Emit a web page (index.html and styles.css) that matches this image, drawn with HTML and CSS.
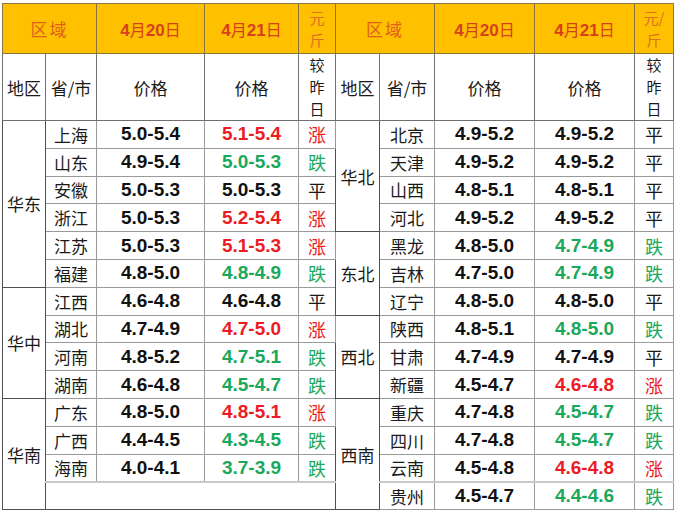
FILE: index.html
```html
<!DOCTYPE html>
<html lang="zh-CN">
<head>
<meta charset="utf-8">
<link rel="stylesheet" href="styles.css">
</head>
<body>
<table class="price-table">
  <colgroup>
    <col class="c-reg-l"><col class="c-prov-l"><col class="c-p1-l"><col class="c-p2-l"><col class="c-chg-l">
    <col class="c-reg-r"><col class="c-prov-r"><col class="c-p1-r"><col class="c-p2-r"><col class="c-chg-r">
  </colgroup>
  <thead>
    <tr class="head-1">
      <th colspan="2" class="h-area">区域</th>
      <th class="h-date"><b>4</b>月<b>20</b>日</th>
      <th class="h-date"><b>4</b>月<b>21</b>日</th>
      <th class="h-unit"><span class="ch">元</span><span class="ch">斤</span></th>
      <th colspan="2" class="h-area split">区域</th>
      <th class="h-date"><b>4</b>月<b>20</b>日</th>
      <th class="h-date"><b>4</b>月<b>21</b>日</th>
      <th class="h-unit"><span class="ch">元/</span><span class="ch">斤</span></th>
    </tr>
    <tr class="head-2">
      <th class="sub">地区</th>
      <th class="sub">省/市</th>
      <th class="sub">价格</th>
      <th class="sub">价格</th>
      <th class="sub vert"><span class="vc">较</span><span class="vc">昨</span><span class="vc">日</span></th>
      <th class="sub split">地区</th>
      <th class="sub">省/市</th>
      <th class="sub">价格</th>
      <th class="sub">价格</th>
      <th class="sub vert"><span class="vc">较</span><span class="vc">昨</span><span class="vc">日</span></th>
    </tr>
  </thead>
  <tbody>
    <tr>
      <td rowspan="6" class="region">华东</td>
      <td class="prov">上海</td><td class="num">5.0-5.4</td><td class="num up">5.1-5.4</td><td class="chg up">涨</td>
      <td rowspan="4" class="region split">华北</td>
      <td class="prov">北京</td><td class="num">4.9-5.2</td><td class="num">4.9-5.2</td><td class="chg">平</td>
    </tr>
    <tr>
      <td class="prov">山东</td><td class="num">4.9-5.4</td><td class="num down">5.0-5.3</td><td class="chg down">跌</td>
      <td class="prov">天津</td><td class="num">4.9-5.2</td><td class="num">4.9-5.2</td><td class="chg">平</td>
    </tr>
    <tr>
      <td class="prov">安徽</td><td class="num">5.0-5.3</td><td class="num">5.0-5.3</td><td class="chg">平</td>
      <td class="prov">山西</td><td class="num">4.8-5.1</td><td class="num">4.8-5.1</td><td class="chg">平</td>
    </tr>
    <tr>
      <td class="prov">浙江</td><td class="num">5.0-5.3</td><td class="num up">5.2-5.4</td><td class="chg up">涨</td>
      <td class="prov">河北</td><td class="num">4.9-5.2</td><td class="num">4.9-5.2</td><td class="chg">平</td>
    </tr>
    <tr>
      <td class="prov">江苏</td><td class="num">5.0-5.3</td><td class="num up">5.1-5.3</td><td class="chg up">涨</td>
      <td rowspan="3" class="region split">东北</td>
      <td class="prov">黑龙</td><td class="num">4.8-5.0</td><td class="num down">4.7-4.9</td><td class="chg down">跌</td>
    </tr>
    <tr>
      <td class="prov">福建</td><td class="num">4.8-5.0</td><td class="num down">4.8-4.9</td><td class="chg down">跌</td>
      <td class="prov">吉林</td><td class="num">4.7-5.0</td><td class="num down">4.7-4.9</td><td class="chg down">跌</td>
    </tr>
    <tr>
      <td rowspan="4" class="region">华中</td>
      <td class="prov">江西</td><td class="num">4.6-4.8</td><td class="num">4.6-4.8</td><td class="chg">平</td>
      <td class="prov">辽宁</td><td class="num">4.8-5.0</td><td class="num">4.8-5.0</td><td class="chg">平</td>
    </tr>
    <tr>
      <td class="prov">湖北</td><td class="num">4.7-4.9</td><td class="num up">4.7-5.0</td><td class="chg up">涨</td>
      <td rowspan="3" class="region split">西北</td>
      <td class="prov">陕西</td><td class="num">4.8-5.1</td><td class="num down">4.8-5.0</td><td class="chg down">跌</td>
    </tr>
    <tr>
      <td class="prov">河南</td><td class="num">4.8-5.2</td><td class="num down">4.7-5.1</td><td class="chg down">跌</td>
      <td class="prov">甘肃</td><td class="num">4.7-4.9</td><td class="num">4.7-4.9</td><td class="chg">平</td>
    </tr>
    <tr>
      <td class="prov">湖南</td><td class="num">4.6-4.8</td><td class="num down">4.5-4.7</td><td class="chg down">跌</td>
      <td class="prov">新疆</td><td class="num">4.5-4.7</td><td class="num up">4.6-4.8</td><td class="chg up">涨</td>
    </tr>
    <tr>
      <td rowspan="4" class="region">华南</td>
      <td class="prov">广东</td><td class="num">4.8-5.0</td><td class="num up">4.8-5.1</td><td class="chg up">涨</td>
      <td rowspan="4" class="region split">西南</td>
      <td class="prov">重庆</td><td class="num">4.7-4.8</td><td class="num down">4.5-4.7</td><td class="chg down">跌</td>
    </tr>
    <tr>
      <td class="prov">广西</td><td class="num">4.4-4.5</td><td class="num down">4.3-4.5</td><td class="chg down">跌</td>
      <td class="prov">四川</td><td class="num">4.7-4.8</td><td class="num down">4.5-4.7</td><td class="chg down">跌</td>
    </tr>
    <tr class="last-filled">
      <td class="prov">海南</td><td class="num">4.0-4.1</td><td class="num down">3.7-3.9</td><td class="chg down">跌</td>
      <td class="prov">云南</td><td class="num">4.5-4.8</td><td class="num up">4.6-4.8</td><td class="chg up">涨</td>
    </tr>
    <tr>
      <td colspan="4" class="empty"></td>
      <td class="prov">贵州</td><td class="num">4.5-4.7</td><td class="num down">4.4-4.6</td><td class="chg down">跌</td>
    </tr>
  </tbody>
</table>
</body>
</html>
```
FILE: styles.css
```css
html, body {
  margin: 0;
  padding: 0;
  background: #ffffff;
}
body {
  padding: 3px 0 0 2px;
  font-family: "Noto Sans CJK SC", "Liberation Sans", sans-serif;
}
.price-table {
  border-collapse: collapse;
  table-layout: fixed;
  width: 671px;
  border: 1px solid #404040;
  color: #1a1a1a;
}
.c-reg-l { width: 43px; }
.c-prov-l { width: 51px; }
.c-p1-l { width: 108px; }
.c-p2-l { width: 94px; }
.c-chg-l { width: 37px; }
.c-reg-r { width: 44px; }
.c-prov-r { width: 55px; }
.c-p1-r { width: 100px; }
.c-p2-r { width: 100px; }
.c-chg-r { width: 39px; }

th, td {
  padding: 0;
  text-align: center;
  vertical-align: middle;
  border: 1px solid #9a9a9a;
  white-space: nowrap;
}
.head-1 { height: 50px; }
.head-1 th {
  background: #ffc000;
  border-color: #8a7440;
  font-weight: 400;
}
.h-area {
  color: #e0601a;
  font-size: 17px;
  letter-spacing: 2px;
}
.h-date {
  color: #d8401c;
  font-size: 16px;
}
.h-date b {
  font-family: "Liberation Sans", sans-serif;
  font-weight: 700;
  font-size: 17px;
}
.h-unit {
  color: #e07020;
  font-size: 15px;
}
.ch {
  display: block;
  line-height: 22px;
}
.head-2 { height: 67px; }
.sub {
  font-weight: 400;
  font-size: 17px;
  border-color: #707070;
  color: #1a1a1a;
}
.vert {
  font-size: 15px;
}
.vc {
  display: block;
  line-height: 21.8px;
}
tbody tr { height: 27.8px; }
.region {
  font-size: 17px;
  border-color: #505050;
}
.split {
  border-left: 1px solid #505050;
}
.prov {
  font-size: 17px;
  color: #1a1a1a;
  border-left-color: #404040;
}
.num {
  font-family: "Liberation Sans", sans-serif;
  font-weight: 700;
  font-size: 19px;
  color: #111111;
}
.chg {
  font-size: 18px;
}
.up { color: #ec1c24; }
.down { color: #1aa85a; }
.num.down { color: #1aa85a; }
.last-filled td { border-bottom: 2px solid #c8c8c8; }
.last-filled td.region { border-bottom: 1px solid #505050; }
.empty {
  border-color: #505050;
  border-top: 2px solid #c8c8c8;
}
```
